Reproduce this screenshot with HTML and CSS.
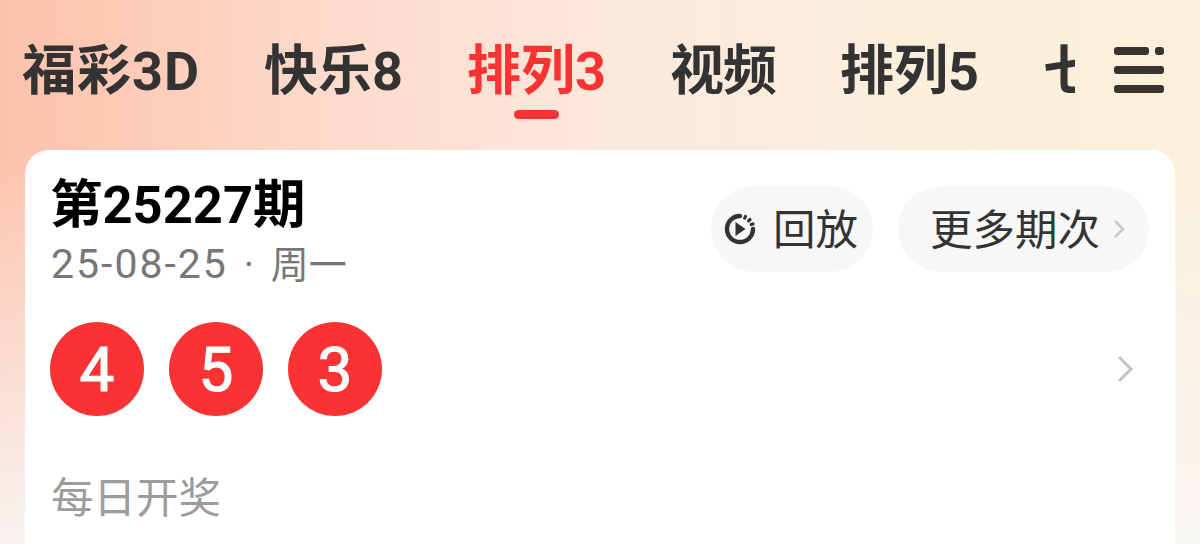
FILE: index.html
```html
<!DOCTYPE html>
<html lang="zh-CN">

<head>
    <meta charset="UTF-8">
    <title>排列3</title>
    <link rel="stylesheet" href="styles.css">
</head>

<body>
    <nav class="tabbar">
        <div class="tabs">
            <span class="tab tab-wide">福彩3D</span>
            <span class="tab">快乐8</span>
            <span class="tab active">排列3</span>
            <span class="tab tab-tight">视频</span>
            <span class="tab">排列5</span>
            <span class="tab">七星彩</span>
        </div>
        <svg class="menu-icon" viewBox="0 0 50 46" width="50" height="46">
            <rect x="0" y="0" width="35" height="8" rx="3" />
            <rect x="41" y="0" width="9" height="8" rx="3" />
            <rect x="0" y="19" width="50" height="8" rx="3" />
            <rect x="0" y="38" width="50" height="8" rx="3" />
        </svg>
    </nav>

    <main class="card">
        <div class="card-head">
            <div class="issue">
                <h1 class="issue-title">第25227期</h1>
                <p class="issue-date"><span class="date-num">25-08-25</span><span class="date-dot">·</span>周一</p>
            </div>
            <div class="actions">
                <button class="pill replay-btn">
                    <svg class="replay-icon" viewBox="0 0 34 34" width="34" height="34">
                        <path d="M17 4A13 13 0 1 0 30 17" fill="none" stroke="#333" stroke-width="4.4" stroke-linecap="round" />
                        <path d="M22.5 4.5l-.8 1.6M27 7.5l-1.4 1.3M30 12l-1.8.6" fill="none" stroke="#333" stroke-width="3.2" stroke-linecap="round" />
                        <path d="M12.5 10l10 7-10 7z" fill="#333" />
                    </svg>
                    <span class="pill-text">回放</span>
                </button>
                <button class="pill more-btn">
                    <span class="pill-text">更多期次</span>
                    <svg class="chevron" viewBox="0 0 12 20" width="12" height="20">
                        <path d="M2 2l8 8-8 8" fill="none" stroke="#c9c9c9" stroke-width="2.8" />
                    </svg>
                </button>
            </div>
        </div>

        <div class="result-row">
            <div class="balls">
                <span class="ball">4</span>
                <span class="ball">5</span>
                <span class="ball">3</span>
            </div>
            <svg class="result-arrow" viewBox="0 0 18 28" width="18" height="28">
                <path d="M3 2l12 12L3 26" fill="none" stroke="#c4c4c4" stroke-width="3" />
            </svg>
        </div>

        <p class="draw-note">每日开奖</p>
    </main>
</body>

</html>
```

FILE: styles.css
```css
* {
    margin: 0;
    padding: 0;
    box-sizing: border-box;
    font-family: 'Roboto', 'Noto Sans CJK SC', sans-serif;
}

html,
body {
    height: 100%;
    overflow: hidden;
}

body {
    background:
        linear-gradient(180deg, rgba(247, 247, 247, 0) 28%, rgba(248, 247, 246, 0.92) 100%),
        linear-gradient(90deg, #fdc2ab 0%, #fddccd 30%, #fde8dc 50%, #fbefdc 75%, #fbf0da 100%);
    color: #333;
}

.tabbar {
    height: 150px;
    padding: 0 36px 0 22px;
    display: flex;
    justify-content: space-between;
}

.tabs {
    width: 1053px;
    display: flex;
    gap: 64px;
    overflow: hidden;
    padding-top: 34px;
}

.tab {
    font-size: 54px;
    line-height: 76px;
    height: 85px;
    font-weight: 700;
    color: #333;
    white-space: nowrap;
    position: relative;
}

.tab-wide {
    letter-spacing: 1px;
}

.tab-tight {
    letter-spacing: -1px;
}

.tab.active {
    color: #f83333;
}

.tab.active::after {
    content: '';
    position: absolute;
    left: 50%;
    bottom: 0;
    width: 45px;
    height: 9px;
    margin-left: -23px;
    border-radius: 5px;
    background-color: #f83333;
}

.menu-icon {
    margin-top: 47px;
    fill: #3a3430;
}

.card {
    margin: 0 25px;
    height: 394px;
    padding: 24px 25px 0 25px;
    background-color: #ffffff;
    border-radius: 24px 24px 0 0;
}

.card-head {
    display: flex;
    justify-content: space-between;
    align-items: flex-start;
}

.issue {
    padding-left: 1px;
}

.issue-title {
    font-size: 52.5px;
    line-height: 62px;
    font-weight: 700;
    color: #000;
    margin-left: -1px;
}

.issue-date {
    font-size: 38px;
    line-height: 52px;
    color: #777;
    margin-top: 2px;
    display: flex;
    align-items: baseline;
}

.date-num {
    font-size: 41px;
    letter-spacing: 2px;
}

.date-dot {
    margin: 0 17px 0 16px;
}

.actions {
    display: flex;
    gap: 25px;
    margin-top: 12px;
    margin-right: 1px;
}

.pill {
    height: 86px;
    border: none;
    border-radius: 43px;
    background-color: #f7f7f7;
    color: #333;
    font-size: 42.5px;
    display: flex;
    align-items: center;
}

.pill-text {
    padding-bottom: 5px;
}

.replay-btn {
    width: 162px;
    padding-left: 12px;
    gap: 16px;
}

.more-btn {
    width: 251px;
    padding-left: 32px;
    gap: 13px;
}

.result-row {
    height: 94px;
    margin-top: 31px;
    display: flex;
    align-items: center;
    justify-content: space-between;
    padding-right: 16px;
}

.balls {
    display: flex;
    gap: 25px;
}

.ball {
    width: 94px;
    height: 94px;
    border-radius: 50%;
    background-color: #f93333;
    color: #fff;
    font-family: 'Liberation Sans Narrow', 'Roboto', sans-serif;
    font-size: 62px;
    -webkit-text-stroke: 1.2px #fff;
    display: flex;
    align-items: center;
    justify-content: center;
}

.draw-note {
    margin-top: 53px;
    padding-left: 1px;
    font-size: 42.5px;
    line-height: 60px;
    color: #9c9c9c;
}
```
